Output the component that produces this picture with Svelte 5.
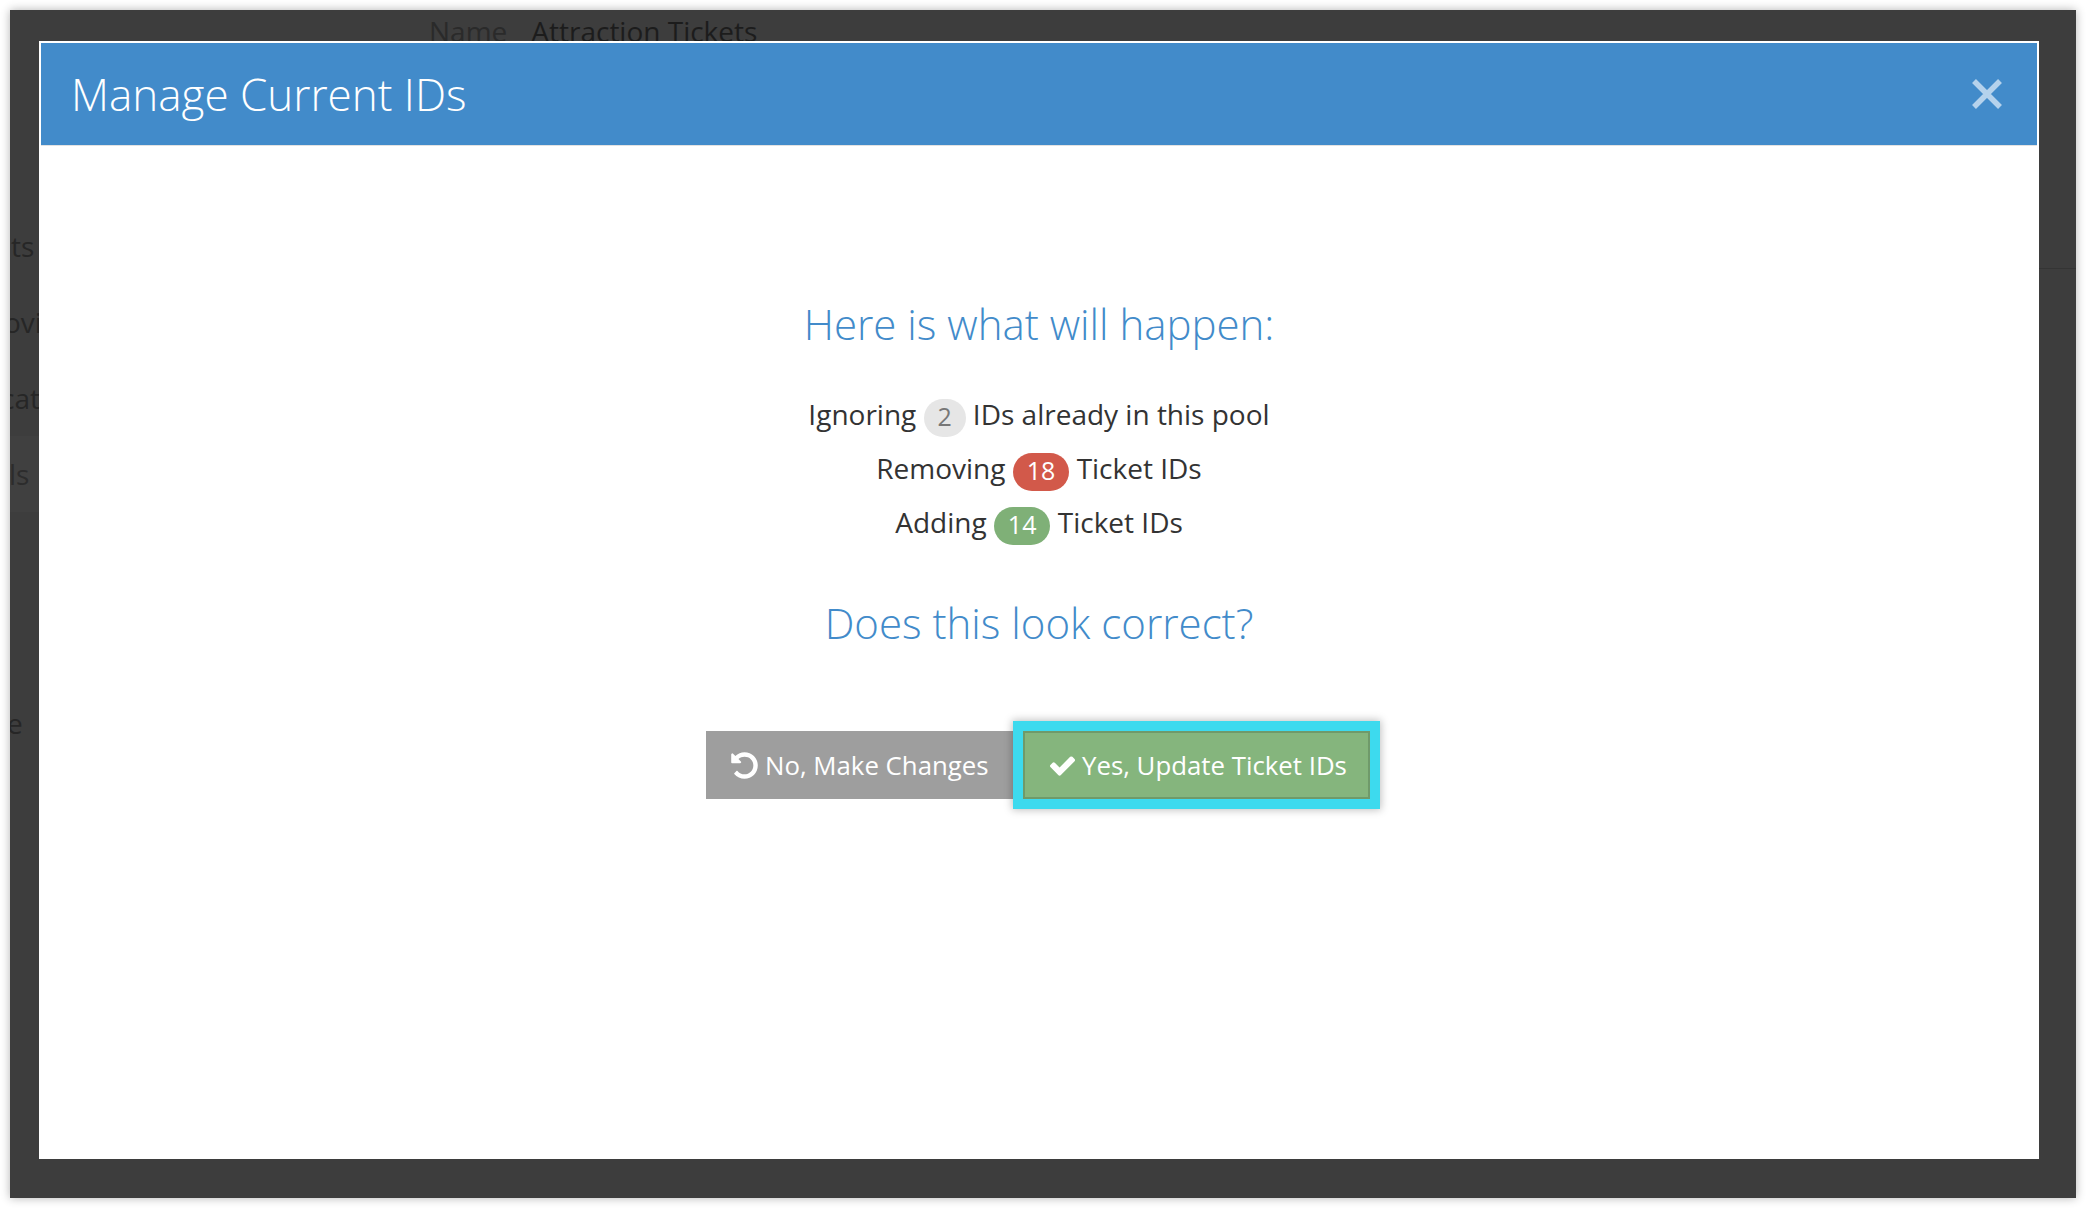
<script lang="ts">
  // visible ends of the page's side labels, shift is how far they slide under the frame edge
  const sideRows = [
    { label: "ts", shift: 1 },
    { label: "ovi", shift: -6 },
    { label: "cat", shift: -9 },
    { label: "ls", shift: -1, shaded: true },
    { label: "", spacer: true },
    { label: "e", shift: -3 },
  ];

  const summary = [
    { before: "Ignoring", count: 2, after: "IDs already in this pool", tone: "muted" },
    { before: "Removing", count: 18, after: "Ticket IDs", tone: "danger" },
    { before: "Adding", count: 14, after: "Ticket IDs", tone: "success" },
  ];
</script>

<div class="frame">
  <div class="backdrop">
    <div class="page-title">
      <span class="field-label">Name</span>
      <span class="field-value">Attraction Tickets</span>
    </div>
    <ul class="side-list">
      {#each sideRows as row}
        <li class:shaded={row.shaded} class:spacer={row.spacer}>
          <span style="margin-left: {row.shift ?? 0}px">{row.label}</span>
        </li>
      {/each}
    </ul>
    <div class="page-rule"></div>
  </div>

  <div class="modal">
    <header class="modal-header">
      <h2>Manage Current IDs</h2>
      <button class="close" aria-label="Close">
        <svg viewBox="0 0 32 32" width="32" height="32">
          <path d="M3 3 L29 29 M29 3 L3 29" />
        </svg>
      </button>
    </header>

    <div class="modal-body">
      <h3>Here is what will happen:</h3>

      <div class="summary">
        {#each summary as line}
          <p>
            {line.before}
            <span class="badge {line.tone}">{line.count}</span>
            {line.after}
          </p>
        {/each}
      </div>

      <h3 class="second">Does this look correct?</h3>

      <div class="actions">
        <button class="btn btn-back">
          <svg viewBox="0 0 1792 1792" width="31" height="31">
            <path d="M1664 896q0 156-61 298t-164 245-245 164-298 61q-172 0-327-72.500t-264-204.500q-7-10-6.500-22.500t8.500-20.500l137-138q10-9 25-9 16 2 23 12 73 95 179 147t225 52q104 0 198.500-40.500t163.500-109.500 109.500-163.500 40.500-198.500-40.500-198.500-109.500-163.500-163.500-109.500-198.500-40.500q-98 0-188 35.500t-160 101.500l137 138q31 30 14 69-17 40-59 40h-448q-26 0-45-19t-19-45v-448q0-42 40-59 39-17 69 14l130 129q107-101 244.500-156.500t284.500-55.500q156 0 298 61t245 164 164 245 61 298z" />
          </svg>
          No, Make Changes
        </button>
        <button class="btn btn-confirm">
          <svg viewBox="0 0 1792 1792" width="29" height="29">
            <path d="M1671 566q0 40-28 68l-724 724-136 136q-28 28-68 28t-68-28l-136-136-362-362q-28-28-28-68t28-68l136-136q28-28 68-28t68 28l294 295 656-657q28-28 68-28t68 28l136 136q28 28 28 68z" />
          </svg>
          Yes, Update Ticket IDs
        </button>
      </div>
    </div>
  </div>
</div>

<style>
  :global(body) {
    background: #fff;
    font-family: "Open Sans", "Liberation Sans", sans-serif;
  }

  .frame {
    position: relative;
    box-sizing: border-box;
    width: 2066px;
    height: 1188px;
    margin: 10px;
    background: #3d3d3d;
    box-shadow: 0 0 9px rgba(0, 0, 0, 0.3);
    overflow: hidden;
  }

  /* Dimmed page behind the modal */
  .backdrop {
    display: grid;
    grid-template-columns: 1fr 37px;
    align-content: start;
    color: #222;
    font-size: 28px;
  }

  .page-title {
    grid-column: 1 / -1;
    display: flex;
    gap: 24px;
    padding: 2px 0 1px 419px;
    line-height: 38px;
  }

  .field-label {
    color: #2a2a2a;
  }

  .field-value {
    color: #1c1c1c;
  }

  .side-list {
    list-style: none;
    margin: 157px 0 0;
    padding: 0;
    width: 40px;
    color: #262626;
  }

  .side-list li {
    height: 76px;
    line-height: 76px;
    white-space: nowrap;
  }

  .side-list li span {
    display: inline-block;
  }

  .side-list li.shaded {
    background: #404040;
    color: #2c2c2c;
  }

  .side-list li.spacer {
    height: 173px;
  }

  .page-rule {
    margin-top: 217px;
    height: 1px;
    background: #343434;
  }

  /* Modal */
  .modal {
    position: absolute;
    left: 29px;
    top: 31px;
    width: 2000px;
    height: 1118px;
    display: flex;
    flex-direction: column;
    background: #fff;
  }

  .modal-header {
    display: flex;
    align-items: center;
    justify-content: space-between;
    box-sizing: border-box;
    height: 102px;
    margin: 2px 2px 0;
    padding: 0 34px 0 30px;
    background: #428bca;
    box-shadow: 0 1px 0 #e2e2e2;
  }

  h2 {
    margin: 0;
    color: #fff;
    font-size: 44px;
    font-weight: 300;
    line-height: 1;
  }

  .close {
    display: flex;
    padding: 0;
    background: none;
    border: 0;
  }

  .close path {
    stroke: #b5d2ec;
    stroke-width: 5.5;
    fill: none;
  }

  .modal-body {
    display: flex;
    flex-direction: column;
    align-items: center;
    padding-top: 151px;
  }

  h3 {
    margin: 0;
    color: #428bca;
    font-size: 42px;
    font-weight: 300;
    line-height: 56px;
  }

  .summary {
    margin-top: 35px;
    color: #333;
    font-size: 28px;
    text-align: center;
  }

  .summary p {
    margin: 0;
    height: 54px;
    line-height: 54px;
  }

  .badge {
    display: inline-block;
    min-width: 16px;
    padding: 0 14px 3px;
    border-radius: 19px;
    font-size: 25px;
    line-height: 35px;
    vertical-align: -1px;
    color: #fff;
  }

  .badge.muted {
    padding: 0 13px 3px;
    background: #e6e6e6;
    color: #777;
  }

  .badge.danger {
    background: #d2594a;
  }

  .badge.success {
    background: #7fb077;
  }

  .second {
    margin-top: 46px;
  }

  .actions {
    display: flex;
    margin-top: 80px;
    padding-right: 2px;
  }

  .btn {
    display: flex;
    align-items: center;
    gap: 5px;
    box-sizing: border-box;
    height: 68px;
    padding: 0 0 0 23px;
    border: 0;
    color: #fff;
    font-family: inherit;
    font-size: 25.800px;
    white-space: nowrap;
  }

  .btn svg {
    flex: none;
    fill: #fff;
  }

  .btn-back {
    width: 317px;
    background: #9e9e9e;
  }

  .btn-confirm {
    position: relative;
    width: 347px;
    background: #85b57d;
    border: 2px solid #6f9a6a;
    outline: 10px solid #3ddaee;
    box-shadow: 0 0 0 10px #3ddaee, 0 0 8px 11px rgba(0, 0, 0, 0.25);
  }
</style>
